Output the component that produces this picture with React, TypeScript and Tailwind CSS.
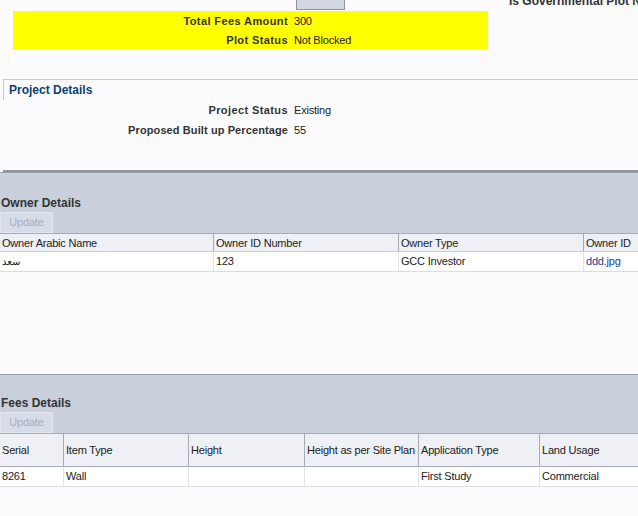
import React from "react";

const font = { fontFamily: '"Liberation Sans", Arial, sans-serif' };

const ownerCols = [
  { label: "Owner Arabic Name", w: "w-[213px]" },
  { label: "Owner ID Number", w: "w-[185px]" },
  { label: "Owner Type", w: "w-[185px]" },
  { label: "Owner ID", w: "w-[80px]" },
];

const feeCols = [
  { label: "Serial", w: "w-[63px]" },
  { label: "Item Type", w: "w-[125px]" },
  { label: "Height", w: "w-[116px]" },
  { label: "Height as per Site Plan", w: "w-[114px]" },
  { label: "Application Type", w: "w-[121px]" },
  { label: "Land Usage", w: "w-[110px]" },
];

const UpdateButton = () => (
  <div className="w-[53px] h-[21px] bg-[#d7dde8] border border-[#e2e6ee] flex items-center justify-center text-[11px] text-[#a9adb5] tracking-[-0.2px]">
    Update
  </div>
);

const Band = ({ title, tall }: { title: string; tall?: boolean }) => (
  <div className={`bg-[#c9d0dc] border-t border-[#9aa1ad] flex flex-col justify-end ${tall ? "h-[61px]" : "h-[59px]"}`}>
    <div className="pl-[1px] text-[12px] font-bold text-[#333] leading-[16px] mb-[1px] whitespace-nowrap">{title}</div>
    <UpdateButton />
  </div>
);

export default function App() {
  return (
    <div className="w-[638px] h-[516px] overflow-hidden bg-[#fbfbfd] text-[#222]" style={font}>
      {/* top strip */}
      <div className="h-[11px] flex overflow-hidden">
        <div className="w-[296px] shrink-0" />
        <div className="w-[49px] h-[10px] shrink-0 bg-[#d2d7e2] border-x border-b border-[#8d939e]" />
        <div className="w-[164px] shrink-0" />
        <div className="shrink-0 mt-[-6px] text-[12px] font-bold text-[#333] whitespace-nowrap leading-[14px]">Is Governmental Plot N</div>
      </div>

      {/* yellow block */}
      <div className="ml-[13px] w-[475px] h-[38px] bg-[#ffff00] pt-[1px]">
        <div className="grid grid-cols-[275px_1fr] gap-x-[6px] text-[11px] leading-[19px]">
          <div className="text-right font-bold text-[#333] tracking-[0.4px]">Total Fees Amount</div>
          <div className="tracking-[-0.2px]">300</div>
          <div className="text-right font-bold text-[#333] tracking-[0.4px]">Plot Status</div>
          <div className="tracking-[-0.2px]">Not Blocked</div>
        </div>
      </div>

      {/* project details */}
      <div className="mt-[30px] ml-[3px] h-[93px] border-t border-[#c4c8d0] border-b-2 border-b-[#8f96a2]">
        <div className="h-[20px] border-l border-[#c4c8d0] pl-[5px] text-[12px] font-bold text-[#0d3f6e] leading-[20px]">
          Project Details
        </div>
        <div className="grid grid-cols-[285px_1fr] gap-x-[6px] text-[11px] leading-[20px]">
          <div className="text-right font-bold text-[#333] tracking-[0.4px]">Project Status</div>
          <div className="tracking-[-0.2px]">Existing</div>
          <div className="text-right font-bold text-[#333] tracking-[0.1px]">Proposed Built up Percentage</div>
          <div className="tracking-[-0.2px]">55</div>
        </div>
      </div>

      {/* owner details */}
      <Band title="Owner Details" tall />
      <div className="h-[141px]">
        <div className="flex h-[19px] bg-[#eef0f5] border-t border-[#a6abb5] border-b border-b-[#c9ccd3]">
          {ownerCols.map((c, i) => (
            <div key={c.label} className={`${c.w} shrink-0 text-[11px] leading-[18px] pl-[2px] tracking-[-0.2px] whitespace-nowrap ${i > 0 ? "border-l border-[#a6abb5]" : ""}`}>
              {c.label}
            </div>
          ))}
        </div>
        <div className="flex h-[20px] bg-white border-b border-[#dcdde1] text-[11px] leading-[19px] tracking-[-0.2px]">
          <div className="w-[213px] shrink-0 pl-[2px]" style={{ fontFamily: '"DejaVu Sans", sans-serif', fontSize: 10 }}>سعد</div>
          <div className="w-[185px] shrink-0 pl-[2px] border-l border-[#e3e4e8]">123</div>
          <div className="w-[185px] shrink-0 pl-[2px] border-l border-[#e3e4e8]">GCC Investor</div>
          <div className="w-[80px] shrink-0 pl-[2px] border-l border-[#e3e4e8] text-[#1a3d99]">ddd.jpg</div>
        </div>
      </div>

      {/* fees details */}
      <Band title="Fees Details" />
      <div className="flex h-[34px] bg-[#eef0f5] border-t border-[#a6abb5] border-b border-b-[#a6abb5]">
        {feeCols.map((c, i) => (
          <div key={c.label} className={`${c.w} shrink-0 text-[11px] flex items-center pl-[2px] tracking-[-0.2px] whitespace-nowrap ${i > 0 ? "border-l border-[#a6abb5]" : ""}`}>
            {c.label}
          </div>
        ))}
      </div>
      <div className="flex h-[20px] bg-white border-b border-[#dcdde1] text-[11px] leading-[19px] tracking-[-0.2px]">
        <div className="w-[63px] shrink-0 pl-[2px]">8261</div>
        <div className="w-[125px] shrink-0 pl-[2px] border-l border-[#e3e4e8]">Wall</div>
        <div className="w-[116px] shrink-0 pl-[2px] border-l border-[#e3e4e8]" />
        <div className="w-[114px] shrink-0 pl-[2px] border-l border-[#e3e4e8]" />
        <div className="w-[121px] shrink-0 pl-[2px] border-l border-[#e3e4e8]">First Study</div>
        <div className="w-[110px] shrink-0 pl-[2px] border-l border-[#e3e4e8]">Commercial</div>
      </div>
    </div>
  );
}
